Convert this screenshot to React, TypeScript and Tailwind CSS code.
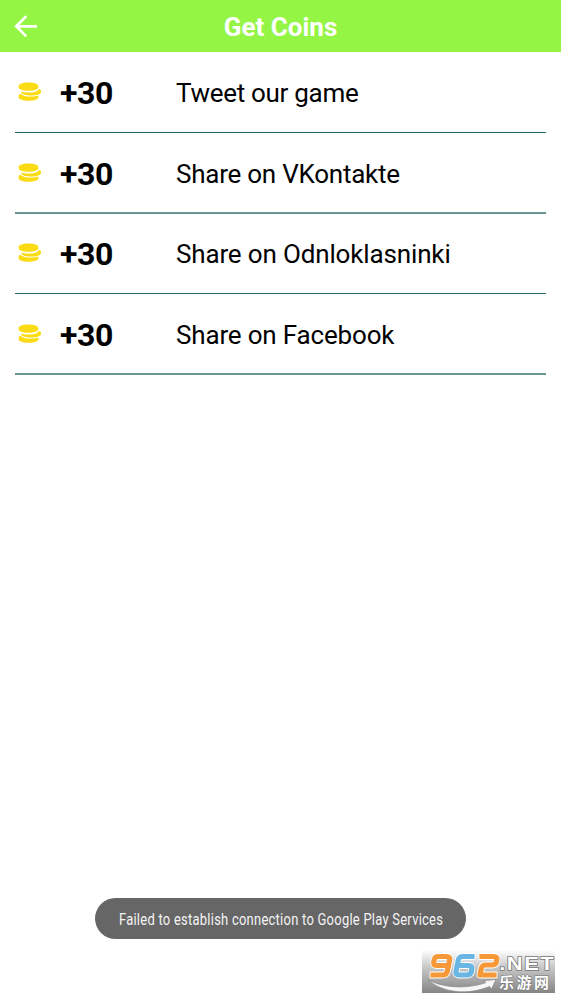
const rewards = [
  { label: 'Tweet our game', tracking: 'tracking-[-0.3px]', row: 'h-[81px] border-b border-[#286565] pb-px' },
  { label: 'Share on VKontakte', tracking: 'tracking-[-0.24px]', row: 'h-[81px] border-b-2 border-[#6b9595]' },
  { label: 'Share on Odnloklasninki', tracking: 'tracking-[-0.15px]', row: 'h-[80px] border-b border-[#286565] pb-[2px]' },
  { label: 'Share on Facebook', tracking: 'tracking-[-0.17px]', row: 'h-[81px] border-b-2 border-[#6b9595]' },
];

function BackArrow() {
  return (
    <svg className="h-[26px] w-[26px]" viewBox="0 0 26 26" fill="none" stroke="#fff" strokeWidth="2.7">
      <path d="M14.300 3.200 4.200 13.300l10.100 10.100M4.500 13.300H25" />
    </svg>
  );
}

function Coins() {
  return (
    <svg className="mt-px h-[20px] w-[24px] shrink-0" viewBox="0 0 24 20" fill="#fbdc14">
      <path d="M.6 4.200C.6 1.600 4.900.4 10.500.4s9.800 1.200 9.800 3.800v1.100c0 2.300-4 3.500-9.800 3.500S.6 7.600.6 5.300z" />
      <path d="M3.300 9.500c2 .700 4.500 1 7.500 1 5.200 0 9-1.200 10.300-3.600 1.300.300 1.900.900 1.900 1.700v1.500c0 2.200-4.300 3.500-9.800 3.500-5.300 0-9.500-1.200-9.900-3.300z" />
      <path d="M.6 13.400c.1-.700.800-1.200 2-1.600 1.900 2 5.600 2.800 10.200 2.800 2.800 0 5.200-.300 7.400-1 .2.200.300.500.300.700v.900c0 2.200-4.500 3.500-9.900 3.500-5.600 0-10-1.300-10-3.800z" />
    </svg>
  );
}

function Watermark() {
  return (
    <svg className="block h-[43px] w-[133px]" viewBox="0 0 133 43">
      <defs>
        <linearGradient id="plate" x1="0" y1="0" x2="0" y2="1">
          <stop offset="0" stopColor="#fff" />
          <stop offset="0.4" stopColor="#c8c8c8" />
          <stop offset="1" stopColor="#858585" />
        </linearGradient>
      </defs>
      <path fill="url(#plate)" d="M0 0h133v43H0z" />
      <path
        d="M6 30c14 7 37 10 58 2.500l-2.500-1.800 12.500-1.200-4.500 9.500-2-2.500C46 45.500 21 43 6 30z"
        fill="#f6f6f6"
        stroke="#888"
        strokeWidth=".7"
      />
      <g fill="none" strokeLinejoin="round" strokeLinecap="square" transform="translate(0 .5)">
        <g stroke="#fff" strokeWidth="6.8">
          <path d="M26.500 15H15q-4 0-3.300-3.500l.600-2.500q.700-3 4-3h8q4 0 3.300 3.500l-2.400 11.500q-.700 3.500-4.500 3.500H11" />
          <path d="M50 6H41q-4 0-4.700 3.500L34 21q-.700 3.500 3.300 3.500h7.500q4 0 4.600-3.500l.400-2.500q.700-3.500-3.300-3.500H37" />
          <path d="M60 6h11.500q4 0 3.300 3.500l-.300 1.500q-.700 3.500-4.500 3.500h-6q-4 0-4.700 3.500L58 24.500h14" />
        </g>
        <g strokeWidth="5.200">
          <path stroke="#f79838" d="M26.500 15H15q-4 0-3.300-3.500l.600-2.500q.700-3 4-3h8q4 0 3.300 3.500l-2.400 11.500q-.700 3.500-4.500 3.500H11" />
          <path stroke="#69b6e5" d="M50 6H41q-4 0-4.700 3.500L34 21q-.700 3.500 3.300 3.500h7.500q4 0 4.600-3.500l.400-2.500q.700-3.500-3.300-3.500H37" />
          <path stroke="#f79838" d="M60 6h11.500q4 0 3.300 3.500l-.300 1.500q-.700 3.500-4.500 3.500h-6q-4 0-4.700 3.500L58 24.500h14" />
        </g>
      </g>
      <g fontWeight="700" fill="#fff" stroke="#747474" paintOrder="stroke">
        <text x="65.500" y="20.500" transform="scale(1.18 1)" textLength="46" fontFamily="'Liberation Sans', sans-serif" fontSize="18.500" strokeWidth="1.400">.NET</text>
        <text x="77" y="38" textLength="50" fontFamily="'Noto Sans CJK SC', sans-serif" fontSize="15" strokeWidth="1">乐游网</text>
      </g>
    </svg>
  );
}

export default function App() {
  return (
    <div className="flex h-[999px] w-[561px] flex-col overflow-hidden bg-white font-[Roboto,sans-serif] text-black">
      <header className="grid h-[52px] shrink-0 grid-cols-[1fr_auto_1fr] items-center bg-[#94f545] px-[12px] text-white">
        <BackArrow />
        <h1 className="pt-[2px] text-[26px] font-bold leading-none">Get Coins</h1>
      </header>
      <ul className="px-[15px]">
        {rewards.map(({ label, tracking, row }) => (
          <li key={label} className={`flex items-center pl-[3px] ${row}`}>
            <Coins />
            <span className="ml-[18px] w-[116px] pt-[3px] text-[32px] font-bold leading-none tracking-[-0.4px]">+30</span>
            <span className={`whitespace-nowrap pt-[2px] text-[26px] leading-none ${tracking}`}>{label}</span>
          </li>
        ))}
      </ul>
      <footer className="mt-auto flex flex-col pb-[6px]">
        <div className="ml-[95px] flex h-[41px] w-[371px] items-center justify-center rounded-full bg-[#666] text-white">
          <svg className="h-[30px] w-[340px]" viewBox="0 0 340 30">
            <text x="9.800" y="21.400" transform="scale(.81 1)" textLength="400" fontFamily="Roboto, sans-serif" fontSize="16" fill="#f4f4f4">
              Failed to establish connection to Google Play Services
            </text>
          </svg>
        </div>
        <div className="mr-[6px] mt-[11px] self-end">
          <Watermark />
        </div>
      </footer>
    </div>
  );
}
